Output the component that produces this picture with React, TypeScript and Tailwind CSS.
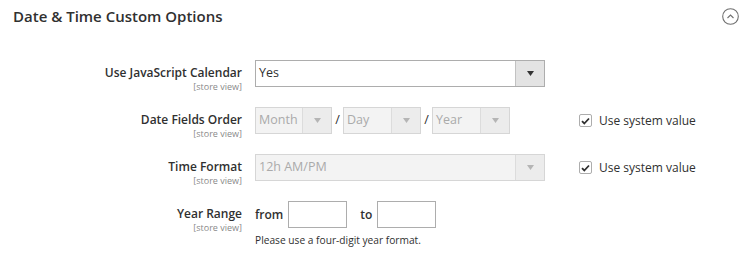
import React from "react";

const font = { fontFamily: "'Open Sans', 'Liberation Sans', sans-serif" };

function Caret({ light }: { light?: boolean }) {
  return (
    <svg width="7" height="5" viewBox="0 0 7 5" className={light ? "fill-[#b5b5b5]" : "fill-[#333]"}>
      <path d="M0 0h7L3.5 5z" />
    </svg>
  );
}

function Select({
  value,
  width,
  disabled,
}: {
  value: string;
  width: string;
  disabled?: boolean;
}) {
  return (
    <div
      className={`flex h-[27px] ${width} border ${
        disabled ? "border-[#d6d6d6] bg-[#f3f3f3] text-[#aaaaaa]" : "border-[#adadad] bg-white text-[#303030]"
      }`}
    >
      <div className="flex flex-1 items-center overflow-hidden whitespace-nowrap pl-[3px] text-[12.5px]">{value}</div>
      <div
        className={`flex w-[29px] items-center justify-center border-l ${
          disabled ? "border-[#dcdcdc] bg-[#ececec]" : "border-[#c2c2c2] bg-[#e3e3e3]"
        }`}
      >
        <Caret light={disabled} />
      </div>
    </div>
  );
}

function Label({ text }: { text: string }) {
  return (
    <div className="h-[27px] w-[242px] shrink-0 pt-[4px] text-right">
      <div className="text-[12px] leading-[17px] font-semibold text-[#303030]">{text}</div>
      <div className="mt-[1px] text-[9px] leading-[10px] text-[#8a8a8a]">[store view]</div>
    </div>
  );
}

function SystemValue() {
  return (
    <div className="ml-[34px] flex h-[27px] items-center gap-[7px]">
      <div className="flex h-[13px] w-[13px] items-center justify-center rounded-[2px] border border-[#adadad] bg-white">
        <svg width="9" height="8" viewBox="0 0 9 8" fill="none" stroke="#303030" strokeWidth="1.8">
          <path d="M1 4.2l2.3 2.3L8 1.5" />
        </svg>
      </div>
      <span className="text-[12px] text-[#303030]">Use system value</span>
    </div>
  );
}

export default function App() {
  return (
    <div style={font} className="h-[263px] w-[750px] bg-white">
      <div className="flex items-center justify-between pl-[13px] pr-[11px] pt-[4px]">
        <h2 className="text-[15px] leading-[24px] font-semibold text-[#303030]">Date &amp; Time Custom Options</h2>
        <svg width="17" height="17" viewBox="0 0 17 17" fill="none" stroke="#707070" strokeWidth="1.1">
          <circle cx="8.5" cy="8.5" r="7.8" />
          <path d="M5.5 10l3-3 3 3" />
        </svg>
      </div>

      <div className="mt-[32px] flex flex-col gap-[20px]">
        <div className="flex h-[27px]">
          <Label text="Use JavaScript Calendar" />
          <div className="ml-[13px]">
            <Select value="Yes" width="w-[290px]" />
          </div>
        </div>

        <div className="flex h-[27px]">
          <Label text="Date Fields Order" />
          <div className="ml-[13px] flex w-[290px] items-center">
            <Select value="Month" width="w-[77px]" disabled />
            <span className="w-[11px] text-center text-[12.5px] text-[#303030]">/</span>
            <Select value="Day" width="w-[78px]" disabled />
            <span className="w-[11px] text-center text-[12.5px] text-[#303030]">/</span>
            <Select value="Year" width="w-[78px]" disabled />
          </div>
          <SystemValue />
        </div>

        <div className="flex h-[27px]">
          <Label text="Time Format" />
          <div className="ml-[13px]">
            <Select value="12h AM/PM" width="w-[290px]" disabled />
          </div>
          <SystemValue />
        </div>

        <div className="flex">
          <Label text="Year Range" />
          <div className="ml-[13px]">
            <div className="flex h-[27px] items-center">
              <span className="text-[12px] font-semibold text-[#303030]">from</span>
              <input className="ml-[5px] h-[27px] w-[59px] border border-[#adadad] bg-white outline-none" />
              <span className="ml-[13px] text-[12px] font-semibold text-[#303030]">to</span>
              <input className="ml-[5px] h-[27px] w-[59px] border border-[#adadad] bg-white outline-none" />
            </div>
            <div className="mt-[5px] text-[10.2px] leading-[14px] text-[#303030]">Please use a four-digit year format.</div>
          </div>
        </div>
      </div>
    </div>
  );
}
